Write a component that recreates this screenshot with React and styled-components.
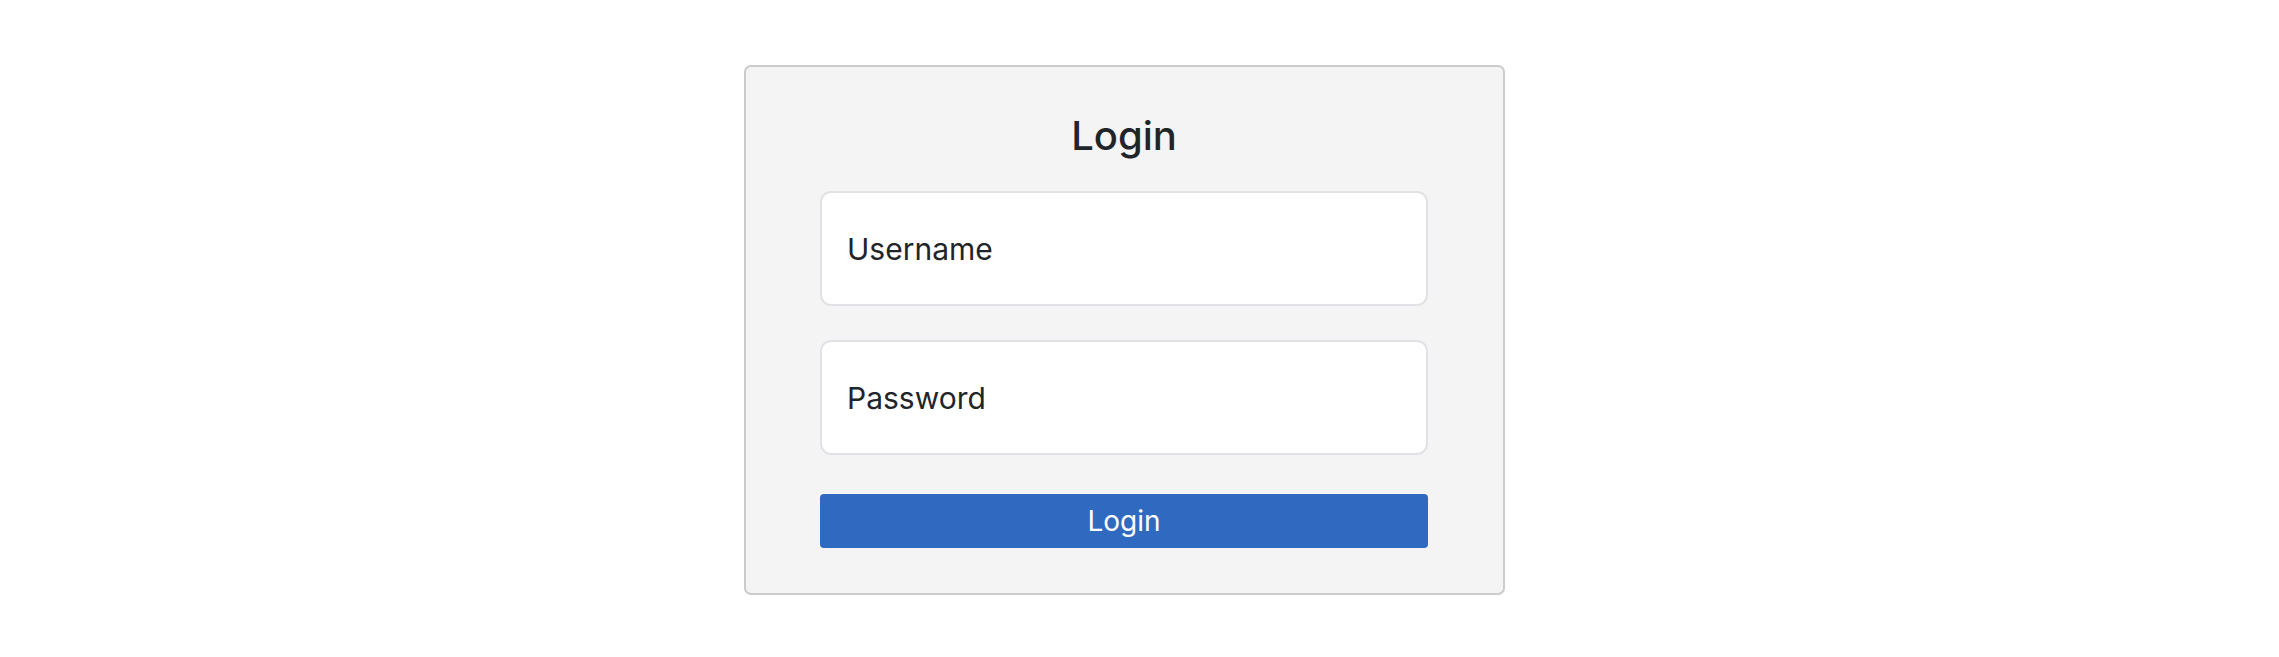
import React, { useState } from 'react'
import styled, { createGlobalStyle } from 'styled-components'

const GlobalStyle = createGlobalStyle`
    body{
        margin:0;
        background:#ffffff;
        font-family: Inter, 'Liberation Sans', sans-serif;
        color:#212529;
    }
`

const Page = styled.div`
    display:flex;
    justify-content:center;
    padding-top:65px;
    padding-right:30px;
`

const Card = styled.form`
    width:761px;
    box-sizing:border-box;
    background:#f4f4f4;
    border:2px solid #cbcbcb;
    border-radius:7px;
    padding:44px 75px 45px 74px;
    display:flex;
    flex-direction:column;
`

const Title = styled.h1`
    margin:0 0 30px 0;
    text-align:center;
    font-size:40px;
    line-height:50px;
    font-weight:500;
    color:#212529;
`

const Field = styled.input`
    height:115px;
    box-sizing:border-box;
    border:2px solid #e0e2e5;
    border-radius:11px;
    background:#fff;
    padding:0 25px;
    font-family:inherit;
    font-size:30px;
    color:#212529;
    outline:none;
    margin-bottom:${p => p.$last ? '39px' : '34px'};
    &::placeholder{
        color:#212529;
        opacity:1;
    }
`

const Button = styled.button`
    height:54px;
    border:none;
    border-radius:4px;
    background:#3069c0;
    color:#fff;
    font-family:inherit;
    font-size:28px;
    cursor:pointer;
`

function App() {
    const [username, setUsername] = useState("")
    const [password, setPassword] = useState("")

    const onSubmit = e => {
        e.preventDefault()
    }

    return (
        <>
            <GlobalStyle/>
            <Page>
                <Card onSubmit={onSubmit}>
                    <Title>Login</Title>
                    <Field
                        type="text"
                        placeholder="Username"
                        value={username}
                        onChange={({target:{value}}) => setUsername(value)}
                    />
                    <Field
                        $last
                        type="password"
                        placeholder="Password"
                        value={password}
                        onChange={({target:{value}}) => setPassword(value)}
                    />
                    <Button type="submit">Login</Button>
                </Card>
            </Page>
        </>
    )
}
export default App
